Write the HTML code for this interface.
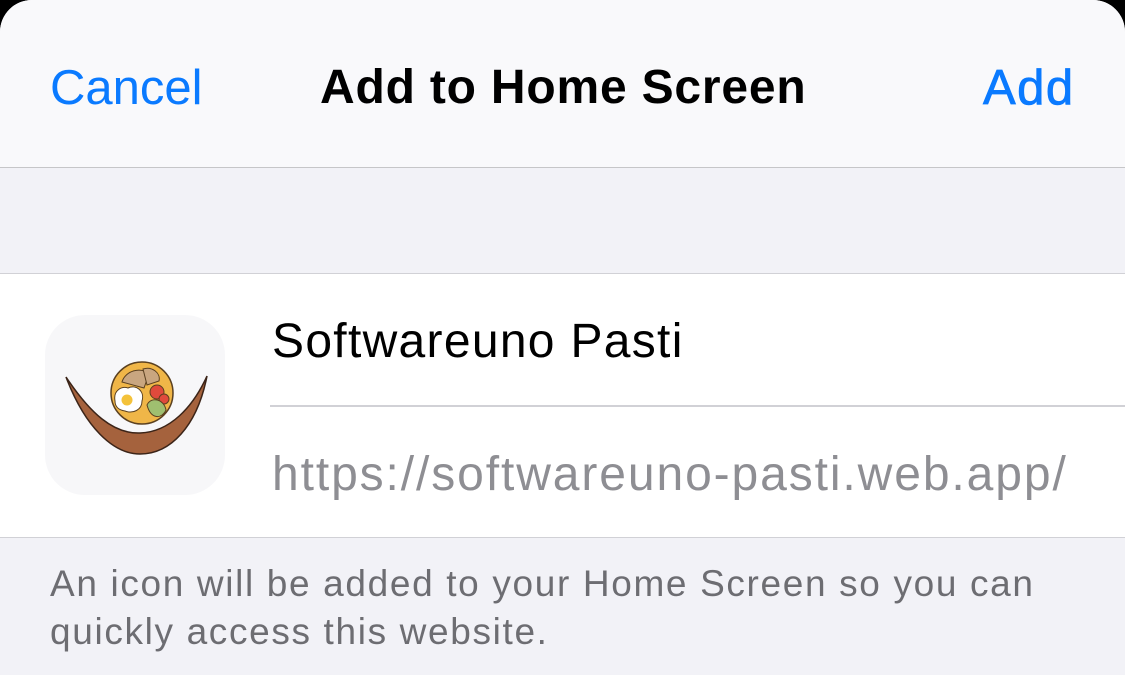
<!DOCTYPE html>
<html><head><meta charset="utf-8"><style>
*{margin:0;padding:0;box-sizing:border-box}
body{width:1125px;height:675px;background:#000;overflow:hidden;font-family:"Liberation Sans",sans-serif;position:relative}
.sheet{position:absolute;left:0;top:0;width:1125px;height:675px;background:#f2f2f7;border-radius:32px 32px 0 0;overflow:hidden}
.hdr{position:absolute;left:0;top:0;width:1125px;height:168px;background:#f9f9fb;border-bottom:1.5px solid #c6c6c8}
.t{position:absolute;white-space:nowrap;line-height:1}
.white{position:absolute;left:0;top:273px;width:1125px;height:265px;background:#fff;border-top:1.5px solid #d1d1d6;border-bottom:1.5px solid #d1d1d6}
.sep{position:absolute;left:270px;top:405px;width:855px;height:1.5px;background:#d1d1d6}
</style></head><body>
<div class="sheet">
<div class="hdr"></div>
<div class="t" style="left:50px;top:64px;font-size:49px;color:#0a7aff">Cancel</div>
<div class="t" style="left:320px;top:64px;font-size:48px;font-weight:bold;color:#000;letter-spacing:0.8px">Add to Home Screen</div>
<div class="t" style="left:983px;top:64px;font-size:49px;color:#0a7aff;letter-spacing:1.5px;-webkit-text-stroke:0.8px #0a7aff">Add</div>
<div class="white"></div>
<div class="sep"></div>
<div style="position:absolute;left:45px;top:315px;width:180px;height:180px;border-radius:40px;background:#f7f7f9"></div>
<svg style="position:absolute;left:45px;top:315px" width="180" height="180" viewBox="0 0 180 180">
<path d="M21 62 C40 112 68 139 95 139 C125 139 152 112 162 61 C148 92 125 117 95 118 C68 119 45 98 21 62 Z" fill="#a5623d" stroke="#3b2418" stroke-width="1.5"/>
<circle cx="97" cy="78" r="31" fill="#f0b648" stroke="#5a4020" stroke-width="1.5"/>
<path d="M77 67 C80 56 96 51 104 59 L99 73 Z" fill="#c9a680" stroke="#5a4020"/>
<path d="M98 54 C107 51 116 58 114 66 L102 70 Z" fill="#c9a680" stroke="#5a4020"/>
<path d="M70 86 C68 75 77 71 83 73 C91 69 100 76 97 86 C97 95 88 99 80 96 C73 95 70 91 70 86 Z" fill="#fff" stroke="#5a4020"/>
<circle cx="82" cy="85" r="5.5" fill="#f4c23a"/>
<circle cx="112" cy="77" r="7" fill="#e04a3c" stroke="#5a4020"/>
<circle cx="119" cy="84" r="5" fill="#e04a3c" stroke="#5a4020"/>
<path d="M102 90 C106 81 119 84 121 95 C117 104 106 105 102 90 Z" fill="#9fbf70" stroke="#5a4020"/>
</svg>
<div class="t" style="left:272px;top:318px;font-size:48px;color:#000;letter-spacing:1.3px">Softwareuno Pasti</div>
<div class="t" style="left:272px;top:451px;font-size:48px;color:#8e8e93;letter-spacing:1.9px">https://softwareuno-pasti.web.app/</div>
<div class="t" style="left:50px;top:565px;font-size:37px;color:#6d6d72;letter-spacing:1.65px">An icon will be added to your Home Screen so you can</div>
<div class="t" style="left:50px;top:613px;font-size:37px;color:#6d6d72;letter-spacing:1.65px">quickly access this website.</div>
</div>
</body></html>
